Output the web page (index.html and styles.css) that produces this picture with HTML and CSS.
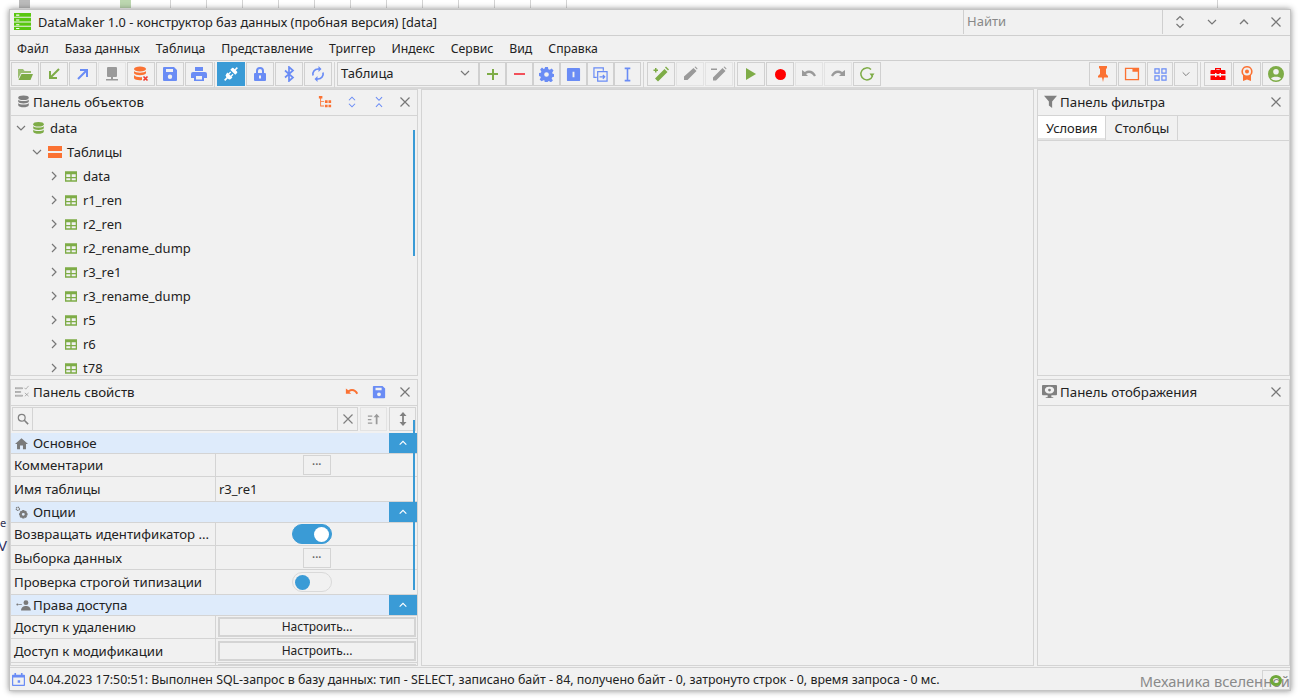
FILE: index.html
```html
<!DOCTYPE html>
<html lang="ru">
<head>
  <meta charset="UTF-8" />
  <title>DataMaker 1.0</title>
  <link rel="stylesheet" href="styles.css">
</head>
<body>

  <svg class="sprite" xmlns="http://www.w3.org/2000/svg">
    <symbol id="close" viewBox="0 0 12 12"><path d="M1.500 1.500l9 9M10.500 1.500l-9 9" fill="none" stroke="currentColor" stroke-width="1.200"/></symbol>
    <symbol id="down" viewBox="0 0 12 12"><path d="M2 4l4 4 4-4" fill="none" stroke="currentColor" stroke-width="1.200"/></symbol>
    <symbol id="up" viewBox="0 0 12 12"><path d="M2 8l4-4 4 4" fill="none" stroke="currentColor" stroke-width="1.400"/></symbol>
    <symbol id="right" viewBox="0 0 12 12"><path d="M4 2l4 4-4 4" fill="none" stroke="currentColor" stroke-width="1.200"/></symbol>
    <symbol id="updown" viewBox="0 0 12 16"><path d="M2.500 6L6 2.500 9.500 6M2.500 10L6 13.500 9.500 10" fill="none" stroke="currentColor" stroke-width="1.200"/></symbol>
    <symbol id="collapse" viewBox="0 0 12 16"><path d="M2.500 2.500L6 6 9.500 2.500M2.500 13.500L6 10 9.500 13.500" fill="none" stroke="currentColor" stroke-width="1.200"/></symbol>
    <symbol id="db" viewBox="0 0 16 16"><ellipse cx="8" cy="3.500" rx="6.500" ry="2.800"/><path d="M1.500 5.500c1 2.500 12 2.500 13 0v2.800c-1 2.700-12 2.700-13 0zM1.500 9.800c1 2.500 12 2.500 13 0v2.700c-1 3.300-12 3.300-13 0z"/></symbol>
    <symbol id="db-x" viewBox="0 0 16 16"><ellipse cx="7" cy="3" rx="6" ry="2.500" fill="#fb7233"/><path fill="#fb7233" d="M1 5c1 2.200 11 2.200 12 0v2.300c-1 2.500-11 2.500-12 0zM1 9c1 2.200 7 2.500 8 2v3c-3 .5-7 0-8-1.800z"/><path d="M10.500 10.500l4 4M14.500 10.500l-4 4" stroke="#f03a2e" stroke-width="1.600" fill="none"/></symbol>
    <symbol id="table" viewBox="0 0 14 14"><path fill-rule="evenodd" d="M0 1h14v12H0zM1.500 4.500v3h4.700v-3zm6.300 0v3h4.700v-3zM1.500 9v2.500h4.700V9zm6.300 0v2.500h4.700V9z"/></symbol>
    <symbol id="folder" viewBox="0 0 16 16"><path d="M1 3h5l1.500 2H14v2H4L1 13z" opacity=".75"/><path d="M4.500 8H16l-2.500 6H1.500z"/></symbol>
    <symbol id="arrow-in" viewBox="0 0 16 16"><path d="M13 3L5 11M4 5v7h7" fill="none" stroke="currentColor" stroke-width="2"/></symbol>
    <symbol id="arrow-out" viewBox="0 0 16 16"><path d="M3 13l8-8M5 4h7v7" fill="none" stroke="currentColor" stroke-width="2"/></symbol>
    <symbol id="network" viewBox="0 0 16 16"><rect x="3" y="1" width="10" height="10" rx="1"/><path d="M7 11h2v2h5v1.500H2V13h5z"/></symbol>
    <symbol id="save" viewBox="0 0 16 16"><path fill-rule="evenodd" d="M2 1h10l3 3v10a1 1 0 0 1-1 1H2a1 1 0 0 1-1-1V2a1 1 0 0 1 1-1zm2 2v3h7V3zm4 5.500a2.200 2.200 0 1 0 0 4.400 2.200 2.200 0 0 0 0-4.400z"/></symbol>
    <symbol id="print" viewBox="0 0 16 16"><path fill-rule="evenodd" d="M4 1h8v4H4zM2 6h12a2 2 0 0 1 2 2v4h-3v3H3v-3H0V8a2 2 0 0 1 2-2zm3 4v3.500h6V10z"/></symbol>
    <symbol id="plug" viewBox="0 0 16 16"><g transform="rotate(45 8 8)"><path d="M7.200-1h1.600v3h1.700a1 1 0 0 1 1 1v2.500h-7V3a1 1 0 0 1 1-1h1.700zM4.500 9.500h7V11a2.500 2.500 0 0 1-2.500 2.500h-.2V17H7.200v-3.500H7A2.500 2.500 0 0 1 4.500 11zM5.700 6.800h1.300v2.700H5.700zM9 6.800h1.300v2.700H9z"/></g></symbol>
    <symbol id="lock" viewBox="0 0 16 16"><path fill-rule="evenodd" d="M8 1a4 4 0 0 1 4 4v2h1a1 1 0 0 1 1 1v6a1 1 0 0 1-1 1H3a1 1 0 0 1-1-1V8a1 1 0 0 1 1-1h1V5a4 4 0 0 1 4-4zm0 2a2 2 0 0 0-2 2v2h4V5a2 2 0 0 0-2-2zm-1 6.500v3h2v-3z"/></symbol>
    <symbol id="bluetooth" viewBox="0 0 16 16"><path d="M4 4.500l8 7L8 15V1l4 3.500-8 7" fill="none" stroke="currentColor" stroke-width="1.700"/></symbol>
    <symbol id="sync" viewBox="0 0 16 16"><path d="M3 9.500A5.200 5.200 0 0 1 8 3h1M13 6.500A5.200 5.200 0 0 1 8 13H7" fill="none" stroke="currentColor" stroke-width="1.700"/><path d="M8.500 0v6l3-3zM7.500 10v6l-3-3z"/></symbol>
    <symbol id="gear" viewBox="0 0 16 16"><path fill-rule="evenodd" d="M6.500 0h3l.5 2.300 1.500.7 2-1.300 2 2.100L14 6l.5 1.200 1.500.3v3l-2 .5-.5 1.300 1.300 2-2.100 2-2.200-1.300-1 .5-.5 1.500h-3L6 14.500l-1.200-.5-2.100 1.300-2-2L2 11.200 1.500 10 0 9.500v-3l2-.5.500-1.200L1.200 2.700l2-2.100L5 2l1-.4zM8 5.500a2.500 2.500 0 1 0 0 5 2.500 2.500 0 0 0 0-5z"/></symbol>
    <symbol id="index" viewBox="0 0 16 16"><path fill-rule="evenodd" d="M2 1h12a1 1 0 0 1 1 1v12a1 1 0 0 1-1 1H2a1 1 0 0 1-1-1V2a1 1 0 0 1 1-1zm5 4v6h2V5z"/></symbol>
    <symbol id="copy" viewBox="0 0 16 16"><path d="M11 4V1H1v10h3M5 5h10v10H5zM7 10.500h5M10.500 8.500l2 2-2 2" fill="none" stroke="currentColor" stroke-width="1.300"/></symbol>
    <symbol id="cursor" viewBox="0 0 16 16"><path d="M5 1.500h6M5 14.500h6M8 1.500v13" fill="none" stroke="currentColor" stroke-width="1.700"/></symbol>
    <symbol id="wand" viewBox="0 0 16 16"><path d="M11.500 3l3 3L5 15.500l-3-3zM2 2v1.500H.500V5H2v1.500h1.500V5H5V3.500H3.500V2z"/><path d="M13 .500l3 3-1 1-3-3z"/></symbol>
    <symbol id="pencil" viewBox="0 0 16 16"><path d="M11.500 2l3 3-9 9H2v-3.500zM12.500 1l1-.500 2 2-.5 1z"/></symbol>
    <symbol id="wand2" viewBox="0 0 16 16"><path d="M11.500 2l3 3L5 14.500H2v-3zM0 2.500h6V4H0zM12.500 1l1-.500 2 2-.5 1z"/></symbol>
    <symbol id="undo" viewBox="0 0 16 16"><path d="M1 4v6h6L5 8c3-2 6-1 8 2.500l2-1C13 5 8 3 3.800 6z"/></symbol>
    <symbol id="redo" viewBox="0 0 16 16"><path d="M15 4v6H9l2-2c-3-2-6-1-8 2.500l-2-1C3 5 8 3 12.200 6z"/></symbol>
    <symbol id="refresh" viewBox="0 0 16 16"><path d="M13.500 10A6 6 0 1 1 12 3.500" fill="none" stroke="currentColor" stroke-width="1.500"/><path d="M15.500 7.500h-5l2.500 3.500z"/></symbol>
    <symbol id="pin" viewBox="0 0 16 16"><path d="M4 0h8v2l-1 1v5l2 2v1.500H9L8 16l-1-4.500H3V10l2-2V3L4 2z"/></symbol>
    <symbol id="window" viewBox="-1 -1 18 16"><path fill-rule="evenodd" d="M0 0h16v14H0zm1.500 1.500v11h13V4.500H8.500v-3z"/></symbol>
    <symbol id="grid" viewBox="0 0 14 14"><path d="M1 1h4.500v4.500H1zM8.500 1H13v4.500H8.500zM1 8.500h4.500V13H1zM8.500 8.500H13V13H8.500z" fill="none" stroke="currentColor" stroke-width="1.300"/></symbol>
    <symbol id="toolbox" viewBox="0 0 16 14"><path fill-rule="evenodd" d="M5 3V1h6v2h3.500a1 1 0 0 1 1 1v3H11V6H9.500v1h-3V6H5v1H.500V4a1 1 0 0 1 1-1zm1.300 0h3.400V2.300H6.300zM.500 8.500H5V10h1.500V8.500h3V10H11V8.500h4.500V13H.500z"/></symbol>
    <symbol id="award" viewBox="0 0 16 16"><path fill-rule="evenodd" d="M8 0a5.500 5.500 0 0 1 4 9.300V15l-4-1.500L4 15V9.300A5.500 5.500 0 0 1 8 0zm0 1.500a4 4 0 1 0 0 8 4 4 0 0 0 0-8zm0 2a2 2 0 1 1 0 4 2 2 0 0 1 0-4z"/></symbol>
    <symbol id="user" viewBox="0 0 16 16"><path fill-rule="evenodd" d="M8 0a8 8 0 1 1 0 16A8 8 0 0 1 8 0zm0 3a2.800 2.800 0 1 0 0 5.600A2.800 2.800 0 0 0 8 3zM3 12.500c2 2.500 8 2.500 10 0-1-2.500-9-2.500-10 0z"/></symbol>
    <symbol id="tree" viewBox="0 0 16 16"><path d="M1 1h4v3H1zM2.500 4h1v8H7v1H2.500zM3.500 7H7v1H3.500zM8 6h3v3H8zM12 6h3v3h-3zM8 11h3v3H8zM12 11h3v3h-3z"/></symbol>
    <symbol id="props" viewBox="0 0 16 16"><path d="M0 4h8v1H0zM0 8h6v1H0zM0 12h8v1H0zM10 4l1.500 1.500L14.500 2M10.500 9.500l4 3.500M14.500 9.500l-4 3.500" stroke="currentColor" stroke-width=".6" fill="none"/></symbol>
    <symbol id="search" viewBox="0 0 14 14"><circle cx="5.500" cy="5.500" r="4" fill="none" stroke="currentColor" stroke-width="1.400"/><path d="M8.500 8.500l4.500 4.500" stroke="currentColor" stroke-width="1.800"/></symbol>
    <symbol id="sort" viewBox="0 0 16 16"><path d="M1 4h5v1.300H1zM1 8h4v1.300H1zM1 12h5v1.300H1zM11 2l3.500 4H12v8h-2V6H7.500z"/></symbol>
    <symbol id="height" viewBox="0 0 12 16"><path d="M6 0l4 4.500H7v7h3L6 16l-4-4.500h3v-7H2z"/></symbol>
    <symbol id="home" viewBox="0 0 16 16"><path d="M8 1.500l8 7h-2.500V15H9.800v-4.500H6.200V15H2.500V8.500H0z"/></symbol>
    <symbol id="gears" viewBox="0 0 16 16"><circle cx="3.500" cy="3.500" r="2" fill="none" stroke="currentColor" stroke-width="1.500" stroke-dasharray="1.500 .6"/><path fill-rule="evenodd" d="M9 5h2.500l.4 1.300 1.200-.6 1.700 1.700-.6 1.200 1.300.4v2.500l-1.300.4.600 1.200-1.700 1.700-1.200-.6-.4 1.300H9l-.4-1.300-1.200.6-1.700-1.700.6-1.200-1.300-.4V9l1.300-.4-.6-1.200 1.700-1.700 1.200.6zm1.200 3.500a1.800 1.800 0 1 0 0 3.600 1.800 1.800 0 0 0 0-3.600z"/></symbol>
    <symbol id="access" viewBox="0 0 18 16"><circle cx="12" cy="4.500" r="3"/><path d="M6 14c0-7 12-7 12 0zM1.500 5.500a1.300 1.300 0 1 1 0 2.600 1.300 1.300 0 0 1 0-2.600zM3 6.400h4v.9H3z"/></symbol>
    <symbol id="filter" viewBox="0 0 16 16"><path d="M0 1h16L10 8v8l-4-3V8z"/></symbol>
    <symbol id="display" viewBox="0 0 16 16"><path fill-rule="evenodd" d="M1 1h14a1 1 0 0 1 1 1v9a1 1 0 0 1-1 1H10v2h2v1H4v-1h2v-2H1a1 1 0 0 1-1-1V2a1 1 0 0 1 1-1zm7 2a4 4 0 0 0-5 3.500A4 4 0 0 0 8 10a4 4 0 0 0 5-3.500A4 4 0 0 0 8 3zm0 2a1.500 1.500 0 1 1 0 3 1.500 1.500 0 0 1 0-3z"/></symbol>
    <symbol id="calendar" viewBox="0 0 16 16"><path d="M3 0h2v2h6V0h2v2h2a1 1 0 0 1 1 1v12a1 1 0 0 1-1 1H1a1 1 0 0 1-1-1V3a1 1 0 0 1 1-1h2zM1.500 5.500v9h13v-9zM7 9h3v3H7z" fill-rule="evenodd"/></symbol>
  </svg>

  <div class="backdrop">
    <span class="cell-grey"></span>
    <span class="cell-year">2021</span>
    <span class="cell-green"></span>
    <div class="backdrop-lines"></div>
    <div class="backdrop-line"></div>
    <div class="backdrop-e">e</div>
    <div class="backdrop-v">V|</div>
  </div>

  <div class="window">

    <div class="titlebar">
      <svg class="app-logo" viewBox="0 0 16 16">
        <path fill="#59c70f" d="M0 0h16v3.500H0zM0 4.500h16V8H0zM0 9h16v3H0zM0 13h16v3H0z"/>
        <path fill="#fff" d="M2 1.500h3v1H2zM2 6h3v1H2zM2 10.500h3v1H2zM2 14.200h3v.8H2z"/>
      </svg>
      <div class="title">DataMaker 1.0 - конструктор баз данных (пробная версия) [data]</div>
      <div class="find">Найти</div>
      <div class="win-btns">
        <svg class="ic-win-ud"><use href="#updown"/></svg>
        <svg class="ic-win"><use href="#down"/></svg>
        <svg class="ic-win"><use href="#up"/></svg>
        <svg class="ic-win"><use href="#close"/></svg>
      </div>
    </div>

    <div class="menubar">
      <span>Файл</span>
      <span>База данных</span>
      <span>Таблица</span>
      <span>Представление</span>
      <span>Триггер</span>
      <span>Индекс</span>
      <span>Сервис</span>
      <span>Вид</span>
      <span>Справка</span>
    </div>

    <div class="toolbar">
      <div class="tb-group snug">
        <button class="tb green"><svg><use href="#folder"/></svg></button>
        <button class="tb green"><svg><use href="#arrow-in"/></svg></button>
        <button class="tb blue"><svg><use href="#arrow-out"/></svg></button>
        <button class="tb grey off"><svg><use href="#network"/></svg></button>
        <button class="tb"><svg><use href="#db-x"/></svg></button>
        <button class="tb blue"><svg><use href="#save"/></svg></button>
        <button class="tb blue"><svg><use href="#print"/></svg></button>
      </div>
      <div class="tb-group">
        <button class="tb active"><svg><use href="#plug"/></svg></button>
        <button class="tb blue"><svg><use href="#lock"/></svg></button>
        <button class="tb blue"><svg><use href="#bluetooth"/></svg></button>
        <button class="tb blue"><svg><use href="#sync"/></svg></button>
      </div>
      <div class="tb-group loose">
        <div class="combo">Таблица<svg class="combo-arrow"><use href="#down"/></svg></div>
        <button class="tb2 green"><span class="plus"></span></button>
        <button class="tb2 red"><span class="minus"></span></button>
        <button class="tb2 blue"><svg><use href="#gear"/></svg></button>
        <button class="tb2 blue"><svg><use href="#index"/></svg></button>
        <button class="tb2 blue"><svg><use href="#copy"/></svg></button>
        <button class="tb2 blue"><svg><use href="#cursor"/></svg></button>
      </div>
      <div class="tb-group snug">
        <button class="tb green"><svg><use href="#wand"/></svg></button>
        <button class="tb grey off"><svg><use href="#pencil"/></svg></button>
        <button class="tb grey off"><svg><use href="#wand2"/></svg></button>
      </div>
      <div class="tb-group no-line">
        <button class="tb green"><span class="play"></span></button>
        <button class="tb"><span class="rec"></span></button>
        <button class="tb grey off"><svg><use href="#undo"/></svg></button>
        <button class="tb grey off"><svg><use href="#redo"/></svg></button>
        <button class="tb green"><svg><use href="#refresh"/></svg></button>
      </div>
      <div class="tb-group right">
        <button class="tb orange"><svg><use href="#pin"/></svg></button>
        <button class="tb orange"><svg><use href="#window"/></svg></button>
        <div class="split">
          <button class="tb-split blue"><svg><use href="#grid"/></svg></button>
          <button class="tb-split narrow grey"><svg class="small"><use href="#down"/></svg></button>
        </div>
      </div>
      <div class="tb-group no-line">
        <button class="tb scarlet"><svg><use href="#toolbox"/></svg></button>
        <button class="tb orange"><svg><use href="#award"/></svg></button>
        <button class="tb green"><svg><use href="#user"/></svg></button>
      </div>
    </div>

    <div class="workspace">

      <div class="column col-left">
        <section class="panel">
          <div class="panel-head">
            <svg class="ic-head grey"><use href="#db"/></svg>
            <span class="panel-title">Панель объектов</span>
            <svg class="ic-act orange"><use href="#tree"/></svg>
            <svg class="ic-act blue"><use href="#updown"/></svg>
            <svg class="ic-act blue"><use href="#collapse"/></svg>
            <svg class="ic-close"><use href="#close"/></svg>
          </div>
          <div class="tree">
            <div class="node lvl0"><svg class="twist"><use href="#down"/></svg><svg class="ic-node green"><use href="#db"/></svg>data</div>
            <div class="node lvl1"><svg class="twist"><use href="#down"/></svg><span class="tables-ic"></span>Таблицы</div>
            <div class="node lvl2"><svg class="twist"><use href="#right"/></svg><svg class="ic-node green"><use href="#table"/></svg>data</div>
            <div class="node lvl2"><svg class="twist"><use href="#right"/></svg><svg class="ic-node green"><use href="#table"/></svg>r1_ren</div>
            <div class="node lvl2"><svg class="twist"><use href="#right"/></svg><svg class="ic-node green"><use href="#table"/></svg>r2_ren</div>
            <div class="node lvl2"><svg class="twist"><use href="#right"/></svg><svg class="ic-node green"><use href="#table"/></svg>r2_rename_dump</div>
            <div class="node lvl2"><svg class="twist"><use href="#right"/></svg><svg class="ic-node green"><use href="#table"/></svg>r3_re1</div>
            <div class="node lvl2"><svg class="twist"><use href="#right"/></svg><svg class="ic-node green"><use href="#table"/></svg>r3_rename_dump</div>
            <div class="node lvl2"><svg class="twist"><use href="#right"/></svg><svg class="ic-node green"><use href="#table"/></svg>r5</div>
            <div class="node lvl2"><svg class="twist"><use href="#right"/></svg><svg class="ic-node green"><use href="#table"/></svg>r6</div>
            <div class="node lvl2"><svg class="twist"><use href="#right"/></svg><svg class="ic-node green"><use href="#table"/></svg>t78</div>
            <div class="scroll-v tree-scroll"></div>
          </div>
        </section>

        <section class="panel">
          <div class="panel-head">
            <svg class="ic-head wide grey"><use href="#props"/></svg>
            <span class="panel-title">Панель свойств</span>
            <svg class="ic-act orange"><use href="#undo"/></svg>
            <svg class="ic-act blue"><use href="#save"/></svg>
            <svg class="ic-close"><use href="#close"/></svg>
          </div>
          <div class="props">
            <div class="prop-search">
              <div class="search-box">
                <span class="search-ic"><svg class="grey"><use href="#search"/></svg></span>
                <span class="search-input"></span>
                <span class="search-clear"><svg class="grey"><use href="#close"/></svg></span>
              </div>
              <button class="sq off grey"><svg><use href="#sort"/></svg></button>
              <button class="sq grey"><svg><use href="#height"/></svg></button>
            </div>

            <div class="group"><svg class="ic-group"><use href="#home"/></svg>Основное<span class="group-btn"><svg><use href="#up"/></svg></span></div>
            <div class="row h23"><div class="key">Комментарии</div><div class="val center"><span class="dots">•••</span></div></div>
            <div class="row h25"><div class="key">Имя таблицы</div><div class="val">r3_re1</div></div>

            <div class="group"><svg class="ic-group"><use href="#gears"/></svg>Опции<span class="group-btn"><svg><use href="#up"/></svg></span></div>
            <div class="row h23"><div class="key">Возвращать идентификатор ...</div><div class="val center"><span class="switch on"></span></div></div>
            <div class="row h24"><div class="key">Выборка данных</div><div class="val center"><span class="dots">•••</span></div></div>
            <div class="row h25"><div class="key">Проверка строгой типизации</div><div class="val center"><span class="switch"></span></div></div>

            <div class="group"><svg class="ic-group wide"><use href="#access"/></svg>Права доступа<span class="group-btn"><svg><use href="#up"/></svg></span></div>
            <div class="row h23"><div class="key">Доступ к удалению</div><div class="val fill"><span class="setup">Настроить...</span></div></div>
            <div class="row h24"><div class="key">Доступ к модификации</div><div class="val fill"><span class="setup">Настроить...</span></div></div>
            <div class="row h23"><div class="key"></div><div class="val fill"><span class="setup"></span></div></div>
            <div class="scroll-v prop-scroll"></div>
          </div>
        </section>
      </div>

      <section class="panel col-center"></section>

      <div class="column col-right">
        <section class="panel">
          <div class="panel-head">
            <svg class="ic-head grey"><use href="#filter"/></svg>
            <span class="panel-title">Панель фильтра</span>
            <svg class="ic-close"><use href="#close"/></svg>
          </div>
          <div class="tabs">
            <span class="tab current">Условия</span>
            <span class="tab">Столбцы</span>
          </div>
        </section>
        <section class="panel">
          <div class="panel-head">
            <svg class="ic-head wide grey"><use href="#display"/></svg>
            <span class="panel-title">Панель отображения</span>
            <svg class="ic-close"><use href="#close"/></svg>
          </div>
        </section>
      </div>
    </div>

    <div class="statusbar">
      <svg class="ic-status blue"><use href="#calendar"/></svg>
      <span>04.04.2023 17:50:51: Выполнен SQL-запрос в базу данных: тип - SELECT, записано байт - 84, получено байт - 0, затронуто строк - 0, время запроса - 0 мс.</span>
    </div>
    <div class="watermark">Механика вселенной</div>
    <div class="status-box"><span class="status-ring"></span></div>
  </div>

</body>
</html>
```

FILE: styles.css
```css
* {
  box-sizing: border-box;
}
html, body {
  margin: 0;
  height: 100%;
}
body {
  position: relative;
  width: 1300px;
  height: 700px;
  overflow: hidden;
  background: #fff;
  font-family: "Noto Sans", Arial, sans-serif;
  font-size: 13px;
  color: #222;
}
svg {
  display: block;
  fill: currentColor;
}
button {
  padding: 0;
  font: inherit;
  background: none;
}
.sprite {
  display: none;
}

/* what is behind the window */
.backdrop {
  position: absolute;
  inset: 0;
}
.cell-grey {
  position: absolute;
  left: 19px;
  top: 0;
  width: 11px;
  height: 8px;
  background: #bbb;
}
.cell-green {
  position: absolute;
  left: 120px;
  top: 0;
  width: 11px;
  height: 8px;
  background: #bcd7b0;
}
.cell-year {
  position: absolute;
  left: 36px;
  top: -13px;
  font-size: 12px;
  color: #777;
}
.backdrop-lines {
  position: absolute;
  left: 170px;
  width: 397px;
  top: 0;
  height: 8px;
  background: repeating-linear-gradient(90deg, #d4d4d4 0 1px, transparent 1px 36px);
}
.backdrop-line {
  position: absolute;
  left: 1217px;
  width: 1px;
  top: 0;
  height: 8px;
  background: #d4d4d4;
}
.backdrop-e {
  position: absolute;
  left: 0;
  top: 516px;
  font-size: 11px;
  line-height: 14px;
  color: #335;
}
.backdrop-v {
  position: absolute;
  left: -2px;
  top: 536px;
  font-size: 15px;
  line-height: 18px;
  color: #336;
}

/* window */
.window {
  position: absolute;
  left: 9px;
  top: 9px;
  width: 1282px;
  height: 682px;
  display: flex;
  flex-direction: column;
  background: #f1f1f1;
  border: 1px solid #c4c4c4;
  box-shadow: 0 0 6px rgba(0,0,0,0.45);
}
.titlebar {
  display: flex;
  align-items: center;
  height: 26px;
  padding: 0 0 2px 4px;
  border-bottom: 1px solid #cfcfcf;
  flex: none;
}
.app-logo {
  width: 17px;
  height: 17px;
  margin-right: 7px;
}
.title {
  flex: 1;
  font-size: 12.800px;
}
.find {
  width: 200px;
  height: 24px;
  line-height: 23px;
  padding-left: 3px;
  color: #888;
  border-left: 1px solid #cfcfcf;
  border-right: 1px solid #cfcfcf;
}
.win-btns {
  display: flex;
  align-items: center;
  width: 127px;
  padding-left: 1px;
  color: #777;
}
.win-btns svg {
  flex: none;
  margin-left: 10px;
  margin-right: 10px;
}
.ic-win {
  width: 12px;
  height: 12px;
}
.ic-win-ud {
  width: 12px;
  height: 16px;
}
.menubar {
  display: flex;
  align-items: center;
  gap: 16px;
  height: 25px;
  padding-left: 7px;
  font-size: 12.250px;
  border-bottom: 1px solid #cfcfcf;
  flex: none;
}
.toolbar {
  display: flex;
  align-items: flex-start;
  height: 28px;
  padding: 1px 0 0 1px;
  border-bottom: 2px solid #d8d8d8;
  flex: none;
}
.tb-group {
  display: flex;
  gap: 1px;
  height: 26px;
  padding-right: 2px;
  margin-right: 2px;
  border-right: 1px solid #d4d4d4;
}
.tb-group.snug {
  padding-right: 1px;
}
.tb-group.loose {
  margin-right: 3px;
}
.tb-group.no-line {
  border-right: 0;
  padding-right: 0;
  margin-right: 0;
}
.tb-group.right {
  margin-left: auto;
  margin-right: 3px;
}
.tb, .tb2, .tb-split, .sq {
  display: flex;
  align-items: center;
  justify-content: center;
  border: 1px solid #d0d0d0;
}
.tb {
  width: 28px;
  height: 24px;
}
.tb svg {
  width: 16px;
  height: 16px;
}
.tb2 {
  width: 27px;
  height: 24px;
  margin-left: -1px;
}
.tb2 svg {
  width: 15px;
  height: 15px;
}
.tb.off, .sq.off {
  border-color: #e3e3e3;
}
.tb.active {
  background: #3a9bd6;
  border-color: #3a9bd6;
  color: #fff;
}
.green { color: #7eac47; }
.blue { color: #6a8cf5; }
.orange { color: #fb7233; }
.grey { color: #808080; }
.red { color: #f2505a; }
.scarlet { color: #f00; }
.off.grey { color: #9a9a9a; }

.combo {
  display: flex;
  align-items: center;
  justify-content: space-between;
  width: 142px;
  height: 24px;
  padding: 0 7px 2px 3px;
  border: 1px solid #d0d0d0;
}
.combo-arrow {
  width: 12px;
  height: 12px;
  color: #777;
}
.plus, .minus {
  position: relative;
  width: 11px;
  height: 2px;
  background: currentColor;
}
.plus::after {
  content: "";
  position: absolute;
  left: 4.500px;
  top: -4.500px;
  width: 2px;
  height: 11px;
  background: currentColor;
}
.play {
  border-left: 10px solid currentColor;
  border-top: 6px solid transparent;
  border-bottom: 6px solid transparent;
}
.rec {
  width: 11px;
  height: 11px;
  border-radius: 50%;
  background: #f00;
}
.split {
  display: flex;
  gap: 1px;
}
.tb-split {
  width: 26px;
  height: 24px;
}
.tb-split.narrow {
  width: 24px;
}
.tb-split svg {
  width: 13px;
  height: 13px;
}
.tb-split svg.small {
  width: 10px;
  height: 10px;
}

/* panels */
.workspace {
  flex: 1;
  display: flex;
  gap: 3px;
  min-height: 0;
}
.column {
  display: flex;
  flex-direction: column;
  gap: 3px;
}
.col-left {
  width: 408px;
}
.col-center {
  flex: 1;
}
.col-right {
  width: 253px;
}
.column .panel {
  height: 287px;
  flex: none;
}
.panel {
  border: 1px solid #d4d4d4;
  overflow: hidden;
}
.panel-head {
  display: flex;
  align-items: center;
  height: 26px;
  padding: 0 0 2px 6px;
  border-bottom: 1px solid #d4d4d4;
}
.ic-head {
  width: 13px;
  height: 13px;
  margin-right: 3px;
}
.ic-head.wide {
  width: 15px;
  height: 15px;
  margin-left: -2px;
  margin-right: 3px;
}
.panel-title {
  flex: 1;
  font-size: 13.300px;
}
.ic-act {
  width: 14px;
  height: 14px;
  margin-right: 13px;
}
.ic-close {
  width: 12px;
  height: 12px;
  margin-right: 6px;
  color: #777;
}
.col-right .ic-close {
  margin-right: 7px;
}
.tree {
  position: relative;
  height: 260px;
  overflow: hidden;
}
.node {
  display: flex;
  align-items: center;
  height: 24px;
}
.lvl0 { padding-left: 4px; }
.lvl1 { padding-left: 20px; }
.lvl2 { padding-left: 37px; }
.twist {
  width: 12px;
  height: 12px;
  margin-right: 5px;
  color: #777;
}
.ic-node {
  width: 12px;
  height: 13px;
  margin-right: 6px;
}
.lvl0 .ic-node {
  width: 13px;
  height: 14px;
  margin-right: 5px;
}
.tables-ic {
  width: 14px;
  height: 12px;
  margin-right: 5px;
  background: linear-gradient(#fb7233 0 5px, transparent 5px 7px, #fb7233 7px);
}
.scroll-v {
  position: absolute;
  width: 2px;
  background: #3a9bd6;
}
.tree-scroll {
  right: 2px;
  top: 14px;
  height: 126px;
}

/* properties */
.props {
  position: relative;
  height: 260px;
  overflow: hidden;
}
.prop-search {
  display: flex;
  gap: 2px;
  height: 27px;
  padding: 1px 1px 2px 1px;
}
.search-box {
  flex: 1;
  display: flex;
  border: 1px solid #d4d4d4;
}
.search-ic, .search-clear {
  display: flex;
  align-items: center;
  justify-content: center;
  width: 19px;
}
.search-ic svg, .search-clear svg {
  width: 12px;
  height: 12px;
}
.search-input {
  flex: 1;
  border-left: 1px solid #d4d4d4;
  border-right: 1px solid #d4d4d4;
}
.sq {
  width: 27px;
  border-color: #d4d4d4;
}
.sq svg {
  width: 14px;
  height: 14px;
}
.group {
  display: flex;
  align-items: center;
  height: 21px;
  padding-left: 4px;
  background: #deebfb;
  border-bottom: 1px solid #d4d4d4;
  font-size: 13.300px;
}
.ic-group {
  width: 13px;
  height: 13px;
  margin-right: 5px;
  color: #7a7a7a;
}
.ic-group.wide {
  width: 17px;
  margin-right: 1px;
}
.group-btn {
  display: flex;
  align-items: center;
  justify-content: center;
  width: 28px;
  height: 100%;
  margin-left: auto;
  background: #3a9bd6;
  color: #fff;
}
.group-btn svg {
  width: 10px;
  height: 10px;
}
.row {
  display: flex;
  border-bottom: 1px solid #d4d4d4;
}
.h23 { height: 23px; }
.h24 { height: 24px; }
.h25 { height: 25px; }
.key {
  display: flex;
  align-items: center;
  width: 205px;
  padding-left: 3px;
  font-size: 13.200px;
  border-right: 1px solid #d4d4d4;
  white-space: nowrap;
  overflow: hidden;
}
.val {
  flex: 1;
  display: flex;
  align-items: center;
  padding-left: 3px;
}
.val.center {
  justify-content: center;
}
.val.fill {
  padding: 1px 1px 1px 2px;
}
.dots {
  display: block;
  width: 28px;
  height: 20px;
  margin-right: 2px;
  border: 1px solid #d4d4d4;
  font-size: 7px;
  line-height: 18px;
  letter-spacing: 0.500px;
  text-align: center;
  color: #666;
}
.setup {
  display: block;
  width: 100%;
  height: 20px;
  border: 2px solid #d4d4d4;
  font-size: 12px;
  line-height: 15px;
  text-align: center;
}
.switch {
  position: relative;
  display: block;
  width: 40px;
  height: 20px;
  margin-right: 13px;
  border-radius: 10px;
  border: 1px solid #d9d9d9;
}
.switch::after {
  content: "";
  position: absolute;
  left: 2px;
  top: 2px;
  width: 15px;
  height: 15px;
  border-radius: 50%;
  background: #3a9bd6;
}
.switch.on {
  background: #3a9bd6;
  border-color: #3a9bd6;
}
.switch.on::after {
  left: 21px;
  background: #fff;
}
.prop-scroll {
  right: 2px;
  top: 14px;
  height: 170px;
}

/* filter tabs */
.tabs {
  display: flex;
  height: 25px;
  border-bottom: 1px solid #d4d4d4;
}
.tab {
  padding: 0 8px;
  font-size: 12.900px;
  line-height: 25px;
  border-right: 1px solid #d4d4d4;
}
.tab.current {
  background: #fff;
  box-shadow: inset 0 -2px 0 #e4e4e4;
}

/* status */
.statusbar {
  display: flex;
  align-items: center;
  height: 23px;
  margin-top: 1px;
  padding: 1px 0 0 2px;
  border-top: 1px solid #d4d4d4;
  font-size: 12.400px;
  flex: none;
}
.ic-status {
  width: 13px;
  height: 13px;
  margin-right: 4px;
}
.watermark {
  position: absolute;
  right: 0;
  bottom: -1px;
  font-size: 14.700px;
  color: #8a8a8a;
  white-space: nowrap;
}
.status-box {
  position: absolute;
  right: 0;
  bottom: 0;
  width: 28px;
  height: 20px;
  border: 1px solid #d4d4d4;
}
.status-ring {
  position: absolute;
  left: 7px;
  top: 4px;
  width: 12px;
  height: 11px;
  border-radius: 50%;
  border: 3px solid #6fa83a;
}
```
